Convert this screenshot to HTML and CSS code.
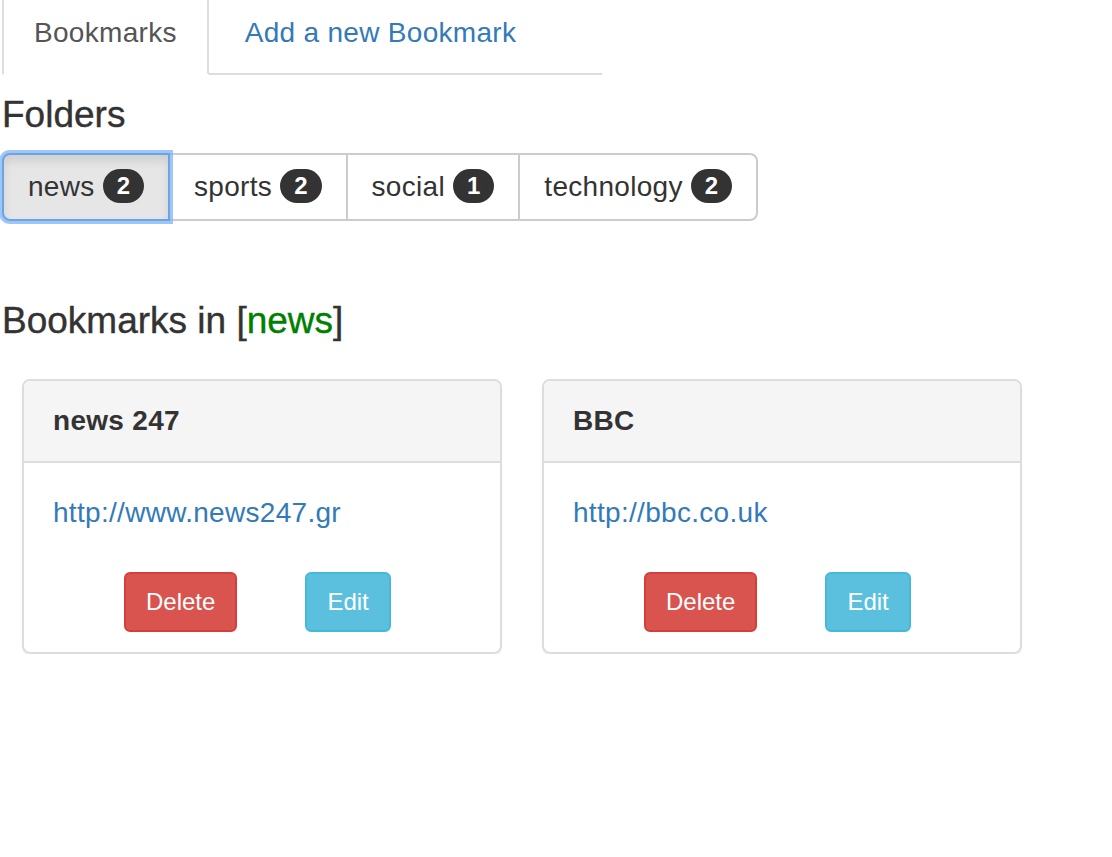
FILE: index.html
```html
<!DOCTYPE html>
<html lang="en">
<head>
    <meta charset="UTF-8">
    <title>Bookmarks</title>
    <link rel="stylesheet" href="styles.css">
</head>
<body>
    <div class="page">
        <ul class="nav-tabs">
            <li class="active"><a href="#">Bookmarks</a></li>
            <li><a href="#">Add a new Bookmark</a></li>
        </ul>

        <h4>Folders</h4>
        <div class="btn-group">
            <button class="btn focused">news <span class="badge">2</span></button>
            <button class="btn">sports <span class="badge">2</span></button>
            <button class="btn">social <span class="badge">1</span></button>
            <button class="btn">technology <span class="badge">2</span></button>
        </div>

        <h4 class="section-title">Bookmarks in [<span class="folder-name">news</span>]</h4>

        <div class="cards">
            <div class="panel">
                <div class="panel-heading"><strong>news 247</strong></div>
                <div class="panel-body">
                    <a href="http://www.news247.gr">http://www.news247.gr</a>
                    <div class="actions">
                        <button class="btn-sm btn-danger">Delete</button>
                        <button class="btn-sm btn-info">Edit</button>
                    </div>
                </div>
            </div>
            <div class="panel">
                <div class="panel-heading"><strong>BBC</strong></div>
                <div class="panel-body">
                    <a href="http://bbc.co.uk">http://bbc.co.uk</a>
                    <div class="actions">
                        <button class="btn-sm btn-danger">Delete</button>
                        <button class="btn-sm btn-info">Edit</button>
                    </div>
                </div>
            </div>
        </div>
    </div>
</body>
</html>
```

FILE: styles.css
```css
body {
    margin: 0;
    font-family: "Liberation Sans", Arial, sans-serif;
    font-size: 28px;
    line-height: 40px;
    letter-spacing: 0.3px;
    color: #333;
    background: #fff;
}
a {
    color: #337ab7;
    text-decoration: none;
}
.page {
    margin-top: -9px;
    padding-left: 2px;
}
.nav-tabs {
    display: flex;
    width: 600px;
    margin: 0;
    padding: 0;
    list-style: none;
    border-bottom: 2px solid #ddd;
}
.nav-tabs li {
    margin-right: 4px;
    margin-bottom: -2px;
}
.nav-tabs a {
    display: block;
    padding: 20px 30px;
    border: 2px solid transparent;
    border-radius: 8px 8px 0 0;
}
.nav-tabs .active a {
    color: #555;
    background: #fff;
    border-color: #ddd;
    border-bottom-color: transparent;
}
h4 {
    font-size: 37px;
    font-weight: 500;
    line-height: 40px;
    letter-spacing: 0;
    -webkit-text-stroke: 0.4px currentColor;
    margin: 20px 0 18px;
}
.btn-group {
    display: inline-flex;
}
.btn {
    font-family: inherit;
    font-size: 28px;
    line-height: 40px;
    letter-spacing: 0.3px;
    color: #333;
    background: #fff;
    border: 2px solid #ccc;
    padding: 12px 24px;
    margin-left: -2px;
    cursor: pointer;
}
.btn:first-child {
    margin-left: 0;
    border-radius: 8px 0 0 8px;
}
.btn:last-child {
    border-radius: 0 8px 8px 0;
}
.btn.focused {
    position: relative;
    z-index: 2;
    background: #e6e6e6;
    border-color: #6aa3e6;
    box-shadow: 0 0 0 3px rgba(126, 180, 245, 0.75), inset 0 6px 10px rgba(0, 0, 0, 0.1);
}
.badge {
    display: inline-block;
    vertical-align: 2px;
    padding: 5px 14px;
    font-size: 24px;
    font-weight: bold;
    line-height: 1;
    letter-spacing: 0;
    color: #fff;
    background: #333;
    border-radius: 20px;
}
.section-title {
    margin-top: 80px;
    margin-bottom: 38px;
}
.folder-name {
    color: green;
}
.cards {
    display: grid;
    grid-template-columns: 480px 480px;
    gap: 40px;
    padding-left: 20px;
}
.panel {
    border: 2px solid #ddd;
    border-radius: 8px;
    box-shadow: 0 2px 2px rgba(0, 0, 0, 0.05);
}
.panel-heading {
    background: #f5f5f5;
    border-bottom: 2px solid #ddd;
    border-radius: 6px 6px 0 0;
    padding: 20px 30px 20px 29px;
}
.panel-body {
    padding: 30px 30px 20px 29px;
}
.actions {
    display: flex;
    gap: 68px;
    margin-top: 39px;
    padding-left: 71px;
}
.btn-sm {
    font-family: inherit;
    font-size: 24px;
    line-height: 36px;
    padding: 10px 20px;
    color: #fff;
    border: 2px solid;
    border-radius: 6px;
    cursor: pointer;
}
.btn-danger {
    background: #d9534f;
    border-color: #d43f3a;
}
.btn-info {
    background: #5bc0de;
    border-color: #46b8da;
}
```
